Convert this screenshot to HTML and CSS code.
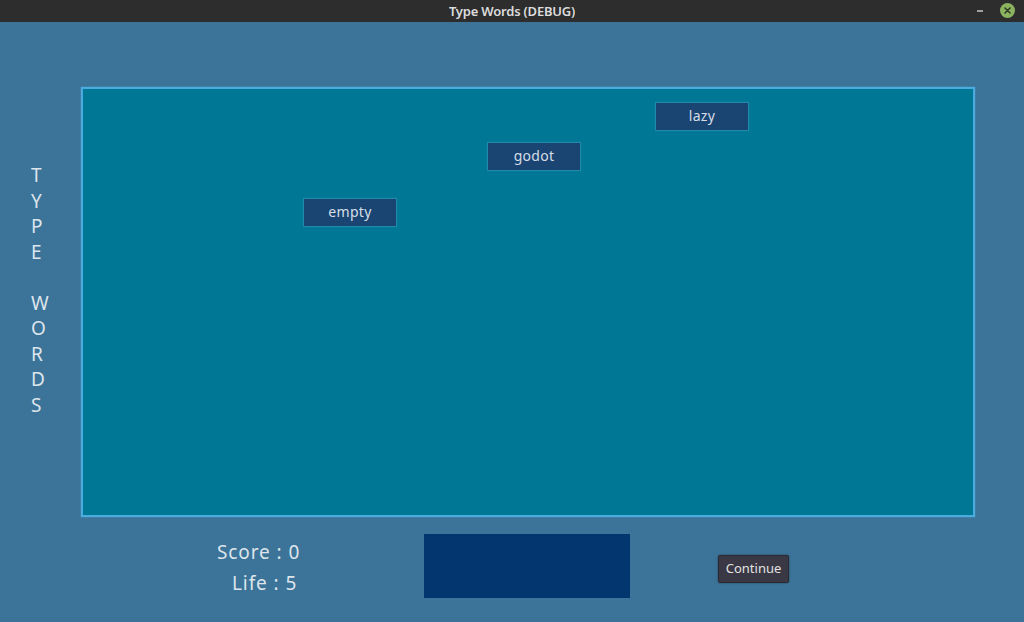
FILE: index.html
```html
<!DOCTYPE html>
<html>
<head>
<meta charset="utf-8">
<link rel="stylesheet" href="styles.css">
</head>
<body>
<div class="window">
  <header class="titlebar">
    <span class="title">Type Words (DEBUG)</span>
    <div class="controls">
      <span class="minimize"></span>
      <svg class="close" width="15" height="15" viewBox="0 0 15 15">
        <circle cx="7.5" cy="7.5" r="7.5" fill="#8bb25f"/>
        <path d="M5 5 L10 10 M10 5 L5 10" stroke="#2e3a22" stroke-width="1.6" stroke-linecap="round"/>
      </svg>
    </div>
  </header>
  <main class="game">
    <div class="play-row">
      <div class="side-label">
        <span>T</span><span>Y</span><span>P</span><span>E</span><span class="gap"></span>
        <span>W</span><span>O</span><span>R</span><span>D</span><span>S</span>
      </div>
      <div class="panel">
        <div class="word" style="left:572px;top:13px">lazy</div>
        <div class="word" style="left:404px;top:53px">godot</div>
        <div class="word" style="left:220px;top:109px">empty</div>
      </div>
    </div>
    <div class="bottom-row">
      <div class="stats">
        <div class="score">Score : 0</div>
        <div class="life">Life : 5</div>
      </div>
      <div class="input-box"></div>
      <button class="continue">Continue</button>
    </div>
  </main>
</div>
</body>
</html>
```

FILE: styles.css
```css
* { box-sizing: border-box; }
html, body { margin: 0; padding: 0; }
body {
  width: 1024px;
  height: 622px;
  overflow: hidden;
  background: #3c7398;
  font-family: "Noto Sans", "DejaVu Sans", sans-serif;
}
.window {
  display: flex;
  flex-direction: column;
  height: 622px;
}
.titlebar {
  height: 22px;
  background: #2d2d2d;
  display: flex;
  align-items: center;
  justify-content: center;
  position: relative;
}
.title {
  color: #dcdcdc;
  font-size: 13px;
  font-weight: 600;
  letter-spacing: -0.2px;
  line-height: 22px;
}
.controls {
  position: absolute;
  right: 9px;
  top: 3px;
  display: flex;
  align-items: center;
  gap: 17px;
}
.minimize {
  width: 6px;
  height: 2px;
  background: #a0a0a0;
}
.close { display: block; }
.game {
  flex: 1;
  display: flex;
  flex-direction: column;
  background: #3c7398;
}
.play-row {
  display: flex;
  margin-top: 65px;
  height: 430px;
}
.side-label {
  width: 81px;
  display: flex;
  flex-direction: column;
  align-items: flex-start;
  padding-top: 76px;
  padding-left: 31px;
  color: #dde5ec;
  font-size: 19px;
  line-height: 25.5px;
}
.side-label span { display: block; height: 25.5px; }
.panel {
  position: relative;
  width: 894px;
  height: 430px;
  background: #007794;
  border: 2px solid #4aacde;
  box-shadow: 0 0 1px #5ab8ea;
}
.word {
  position: absolute;
  width: 94px;
  height: 29px;
  background: #1a4472;
  border: 1px solid #1f88ab;
  box-shadow: 0 0 1px #1a8eb0;
  color: #d6dee6;
  font-size: 14px;
  letter-spacing: 0.3px;
  display: flex;
  align-items: center;
  justify-content: center;
  padding-bottom: 2px;
}
.bottom-row {
  display: flex;
  align-items: flex-start;
  margin-top: 17px;
}
.stats {
  flex: 0 0 300px;
  width: 300px;
  padding-left: 217px;
  color: #dde5ec;
  font-size: 19px;
  line-height: 31px;
  padding-top: 3px;
  letter-spacing: 0.9px;
  white-space: nowrap;
}
.life { padding-left: 15px; }
.input-box {
  margin-left: 124px;
  width: 206px;
  height: 64px;
  background: #03366e;
}
.continue {
  margin-left: 88px;
  margin-top: 21px;
  width: 71px;
  height: 28px;
  background: #393844;
  border: 1px solid #2b2a33;
  border-radius: 2px;
  box-shadow: 0 0 2px rgba(0,0,0,0.45);
  color: #e2e2e2;
  font-family: "Noto Sans", "DejaVu Sans", sans-serif;
  font-size: 13px;
  padding: 0 0 2px;
}
```
